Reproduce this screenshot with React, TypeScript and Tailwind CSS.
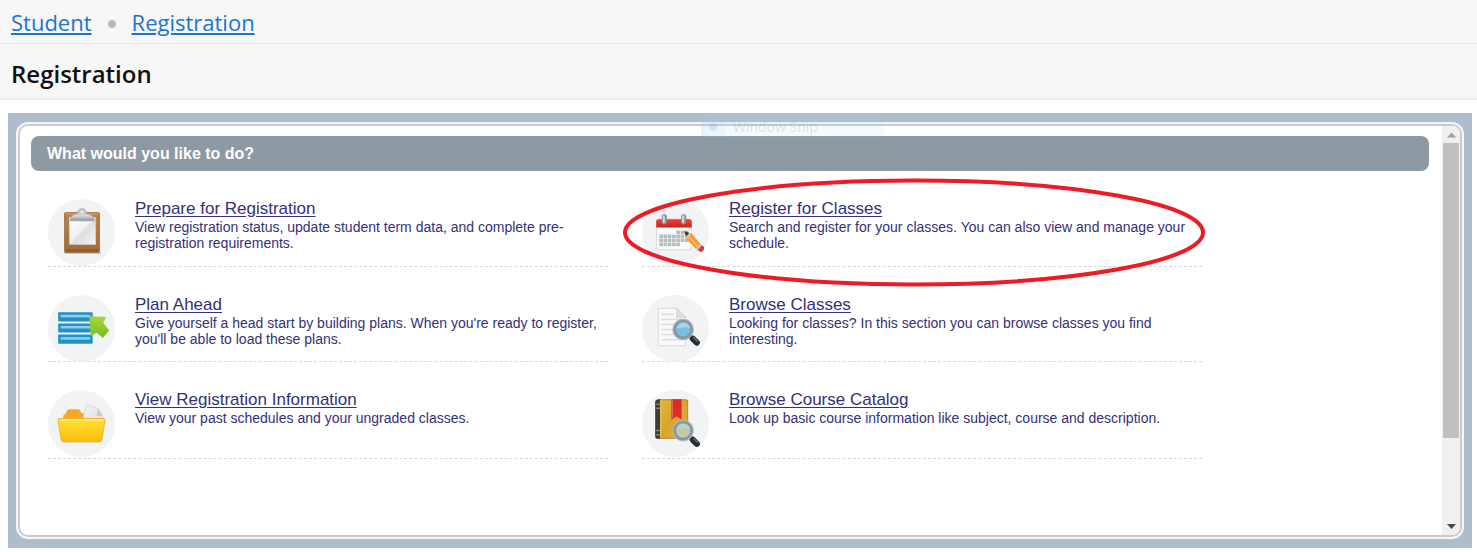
import type { ReactNode } from "react";

function ClipboardIcon() {
  return (
    <svg viewBox="0 0 66 66" className="size-full" aria-hidden="true">
      <defs>
        <linearGradient id="cb-board" x1="0" y1="0" x2="0" y2="1">
          <stop offset="0" stopColor="#c08650" />
          <stop offset="1" stopColor="#a26a38" />
        </linearGradient>
        <linearGradient id="cb-paper" x1="0" y1="0" x2="1" y2="1">
          <stop offset="0" stopColor="#ffffff" />
          <stop offset="0.45" stopColor="#f2f2f3" />
          <stop offset="0.55" stopColor="#dddee0" />
          <stop offset="1" stopColor="#f6f6f6" />
        </linearGradient>
        <linearGradient id="cb-clip" x1="0" y1="0" x2="0" y2="1">
          <stop offset="0" stopColor="#b9bcc0" />
          <stop offset="0.6" stopColor="#d4d6d9" />
          <stop offset="1" stopColor="#8f9397" />
        </linearGradient>
      </defs>
      <rect x="16" y="52" width="36" height="2" fill="#c9c5c2" />
      <rect x="16.5" y="13.500" width="34" height="39" rx="1" fill="url(#cb-board)" stroke="#94612f" />
      <path d="M17.500 14.500h32" stroke="#d5a273" />
      <path d="M17 50.500h33" stroke="#7d4a20" strokeWidth="2" opacity="0.5" />
      <rect x="21" y="18" width="26" height="27" fill="url(#cb-paper)" />
      <path
        d="M22 21.500c0-5 3-6.500 7-7c0-3 1.500-5 4.500-5s4.500 2 4.500 5c4 .5 7.500 2 7.500 7z"
        fill="url(#cb-clip)"
        stroke="#9a9da1"
        strokeWidth="0.700"
      />
      <circle cx="33.500" cy="12.500" r="1.500" fill="#eceded" />
    </svg>
  );
}

function PlanIcon() {
  return (
    <svg viewBox="0 0 66 66" className="size-full" aria-hidden="true">
      <defs>
        <linearGradient id="pl-green" x1="0" y1="0" x2="0" y2="1">
          <stop offset="0" stopColor="#a4d93b" />
          <stop offset="1" stopColor="#74bd22" />
        </linearGradient>
      </defs>
      {[17, 28, 39].map((y) => (
        <g key={y}>
          <rect x="10" y={y} width="34" height="9" rx="1" fill="#2192c7" />
          <rect x="12.500" y={y + 2.500} width="29" height="2.500" fill="#8fd0ea" />
        </g>
      ))}
      <path d="M41 21.500L57 22l-3 5 6 8-6 7-6-5-5.500 3z" fill="url(#pl-green)" stroke="#96cf45" strokeWidth="0.700" />
    </svg>
  );
}

function FolderIcon() {
  return (
    <svg viewBox="0 0 66 66" className="size-full" aria-hidden="true">
      <defs>
        <linearGradient id="fd-front" x1="0" y1="0" x2="0" y2="1">
          <stop offset="0" stopColor="#ffe13a" />
          <stop offset="0.500" stopColor="#ffd01d" />
          <stop offset="1" stopColor="#f9b90c" />
        </linearGradient>
        <linearGradient id="fd-paper" x1="0" y1="0" x2="1" y2="1">
          <stop offset="0" stopColor="#f4f5f5" />
          <stop offset="1" stopColor="#dcdedf" />
        </linearGradient>
      </defs>
      <path d="M15 34v-8q0-2 2-2l2-4q.5-1 2-1h9q1 0 1.500 1l1.500 3h16q3 0 3 3v8z" fill="#f6a724" />
      <path d="M38 14l11 4 5 8-2 10-19-3z" fill="url(#fd-paper)" stroke="#cfd2d4" strokeWidth="0.700" />
      <path d="M49 18l-1 7 6 1z" fill="#c5c9cb" />
      <path d="M12 28h42q2.500 0 2 3l-3 18q-.5 2-2.500 2h-35q-2 0-2.500-2l-3-18q-.5-3 2-3z" fill="url(#fd-front)" stroke="#f1b51d" />
      <path d="M12 29.500h42" stroke="#ffed89" strokeWidth="1.500" />
      <path d="M15 51.500h36" stroke="#ddc78d" opacity="0.600" />
    </svg>
  );
}

function CalendarIcon() {
  const rows = [
    { y: 31, from: 4 },
    { y: 35, from: 0 },
    { y: 39, from: 0 },
    { y: 43, from: 0 },
  ];
  return (
    <svg viewBox="0 0 66 66" className="size-full" aria-hidden="true">
      <defs>
        <linearGradient id="ca-red" x1="0" y1="0" x2="0" y2="1">
          <stop offset="0" stopColor="#ef4238" />
          <stop offset="1" stopColor="#c9221d" />
        </linearGradient>
      </defs>
      <rect x="14.500" y="20" width="34" height="30" rx="2" fill="#fcfcfc" stroke="#d6d8da" />
      <path d="M14 28v-6q0-2 2-2h31q2 0 2 2v6z" fill="url(#ca-red)" />
      {[22, 41].map((x) => (
        <g key={x}>
          <rect x={x - 2.500} y="15" width="5" height="10" rx="2" fill="#8c8f93" />
          <rect x={x - 1.500} y="16" width="2" height="8" rx="1" fill="#d7d9db" />
        </g>
      ))}
      {rows.map(({ y, from }) =>
        [0, 1, 2, 3, 4, 5, 6].map((n) =>
          n >= from && !(y === 43 && n > 4) ? (
            <rect key={`${y}-${n}`} x={17 + n * 4.200} y={y} width="3.600" height="3.500" fill="#b3c0be" />
          ) : null,
        ),
      )}
      <path d="M42 32l7 2 10 12-4 5-11-11z" fill="#f59b32" />
      <path d="M46 37l10 11" stroke="#ffc473" strokeWidth="1.500" />
      <path d="M42 32l7 2-5 6z" fill="#e9c696" />
      <path d="M41.500 31.500l5 2-3 3.500z" fill="#333" />
      <path d="M57 44l2 2-4 5-2-2z" fill="#c4c8cb" />
      <path d="M59 45.500l2 1.500q1 3-2 5h-2l-2-2z" fill="#da3c3d" />
    </svg>
  );
}

function Magnifier({ glass, shine }: { glass: string; shine: string }) {
  return (
    <g>
      <path d="M47 43l5 4" stroke="#8e9498" strokeWidth="4" />
      <path d="M50 46l4 4" stroke="#292b2e" strokeWidth="6" strokeLinecap="round" />
      <path d="M51 45l3.500 3.500" stroke="#65686b" strokeWidth="1.500" strokeLinecap="round" />
      <circle cx="40.500" cy="37" r="8.500" fill={glass} stroke="#8797a0" strokeWidth="3" />
      <circle cx="40.500" cy="37" r="10" fill="none" stroke="#a9b5bc" />
      <path d="M34 36q1-5.500 6.500-6 5.500 0 7 5-7-1-13.500 1z" fill={shine} opacity="0.700" />
    </g>
  );
}

function DocumentSearchIcon() {
  return (
    <svg viewBox="0 0 66 66" className="size-full" aria-hidden="true">
      <path d="M16 13h18l9 9v28H16z" fill="#f9f9fa" stroke="#d7d9da" />
      <path d="M34 13v9h9z" fill="#dedfe1" stroke="#cbcdce" strokeWidth="0.700" />
      {[19, 24, 29, 34, 39, 44].map((y) => (
        <path key={y} d={`M19 ${y}h${y < 24 ? 13 : 20}`} stroke="#dcdee1" strokeWidth="1.500" />
      ))}
      <g transform="translate(0 -3)">
        <Magnifier glass="#76bfe0" shine="#b4e1f3" />
      </g>
    </svg>
  );
}

function CatalogIcon() {
  return (
    <svg viewBox="0 0 66 66" className="size-full" aria-hidden="true">
      <defs>
        <linearGradient id="bk-cover" x1="0" y1="0" x2="1" y2="1">
          <stop offset="0" stopColor="#e5b93a" />
          <stop offset="0.500" stopColor="#d7a52d" />
          <stop offset="1" stopColor="#e3b43c" />
        </linearGradient>
      </defs>
      <rect x="14" y="9.500" width="31" height="38" rx="2" fill="url(#bk-cover)" stroke="#b88420" />
      <path d="M13 11q1-2 4-2h1v39h-3q-2 0-2-2z" fill="#3d3b35" />
      <path d="M14 14h4m-4 4h4m-4 22h4m-4 4h4" stroke="#8d8468" strokeWidth="1.500" />
      <path d="M18.500 10v37" stroke="#f0ce68" />
      <path d="M29 9h10v20l-5-3-5 3z" fill="#db2c29" />
      <path d="M30 10v17" stroke="#f06856" />
      <g transform="translate(0 3)">
        <Magnifier glass="#c3c9a8" shine="#b9d3da" />
      </g>
    </svg>
  );
}

type Entry = { title: string; text: string; icon: ReactNode; circled?: boolean };

const entries: Entry[] = [
  {
    title: "Prepare for Registration",
    text: "View registration status, update student term data, and complete pre-registration requirements.",
    icon: <ClipboardIcon />,
  },
  {
    title: "Register for Classes",
    text: "Search and register for your classes. You can also view and manage your schedule.",
    icon: <CalendarIcon />,
    circled: true,
  },
  {
    title: "Plan Ahead",
    text: "Give yourself a head start by building plans. When you're ready to register, you'll be able to load these plans.",
    icon: <PlanIcon />,
  },
  {
    title: "Browse Classes",
    text: "Looking for classes? In this section you can browse classes you find interesting.",
    icon: <DocumentSearchIcon />,
  },
  {
    title: "View Registration Information",
    text: "View your past schedules and your ungraded classes.",
    icon: <FolderIcon />,
  },
  {
    title: "Browse Course Catalog",
    text: "Look up basic course information like subject, course and description.",
    icon: <CatalogIcon />,
  },
];

function EntryCard({ title, text, icon, circled }: Entry) {
  return (
    <li className="relative flex gap-5 border-b border-dashed border-[#d8d8d8]">
      <div className="size-[67px] shrink-0 rounded-full bg-[#f2f3f5]">{icon}</div>
      <div className="min-w-0 text-[#34307a]">
        <h3 className="text-[17px] leading-5">
          <a href="#" className="underline underline-offset-2">
            {title}
          </a>
        </h3>
        <p className="text-sm leading-4">{text}</p>
      </div>
      {circled && (
        <svg
          className="pointer-events-none absolute -top-5 -right-1 -left-5 h-27 w-[calc(100%+24px)] overflow-visible"
          viewBox="0 0 584 108"
          preserveAspectRatio="none"
          aria-hidden="true"
        >
          <ellipse cx="292" cy="53.500" rx="289" ry="52" fill="none" stroke="#ed1c24" strokeWidth="4" vectorEffect="non-scaling-stroke" />
        </svg>
      )}
    </li>
  );
}

function ScrollTrack() {
  return (
    <div className="flex w-[18px] shrink-0 flex-col items-center bg-[#f0f0f0]" aria-hidden="true">
      <svg viewBox="0 0 17 17" className="size-[17px]">
        <path d="M4 11.500l4.500-5 4.500 5z" fill="#a0a0a0" />
      </svg>
      <div className="w-4 flex-[294] bg-[#c0c0c0]" />
      <div className="flex-[80]" />
      <svg viewBox="0 0 17 17" className="size-[17px]">
        <path d="M4 6l4.500 5L13 6z" fill="#484848" />
      </svg>
    </div>
  );
}

export default function App() {
  return (
    <div className="bg-white font-['Liberation_Sans',Arial,sans-serif]">
      <header className="bg-[#f7f7f7] font-['Open_Sans',sans-serif]">
        <nav className="flex h-11 items-center gap-4 border-b border-[#e6e6e6] px-[11px] text-[22px] leading-8 text-[#1b75cf]" aria-label="Breadcrumb">
          <a href="#" className="underline underline-offset-2">
            Student
          </a>
          <span className="mt-1 size-2 rounded-full bg-[#b9b9b9]" />
          <a href="#" className="underline underline-offset-2">
            Registration
          </a>
        </nav>
        <h1 className="h-14 border-b-2 border-[#ebebeb] px-[11px] pt-3 text-2xl leading-9 font-semibold text-[#111]">Registration</h1>
      </header>

      <main className="mx-[5px] mt-[13px] ml-2 bg-[#aebccb] px-2 py-[9px]">
        <div className="relative rounded-xl border-2 border-[#f4f6f8] bg-white">
          <div className="flex overflow-hidden rounded-[10px] border-2 border-[#cbcbcb]">
            <section className="min-w-0 flex-1 pt-[10px] pr-[13px] pb-[76px] pl-[11px]">
              <h2 className="rounded-lg bg-[#8d99a3] px-4 py-[7px] text-base leading-[21px] font-bold text-white">What would you like to do?</h2>
              <ul className="mt-7 grid grid-cols-[repeat(2,minmax(0,560px))] grid-rows-[68px_67px_69px] gap-x-[34px] gap-y-7 pl-[17px]">
                {entries.map((entry) => (
                  <EntryCard key={entry.title} {...entry} />
                ))}
              </ul>
            </section>
            <ScrollTrack />
          </div>
          <div className="pointer-events-none absolute -top-2 left-[683px] flex h-[21px] w-[183px] items-center bg-[#a8d8f5]/12 font-['Open_Sans',sans-serif] text-sm text-[#777]/20">
            <span className="flex h-full w-6 items-center justify-center bg-[#8fc4f0]/10">
              <span className="size-2 rounded-full bg-[#777]/15" />
            </span>
            <span className="ml-2">Window Snip</span>
          </div>
        </div>
      </main>
    </div>
  );
}
